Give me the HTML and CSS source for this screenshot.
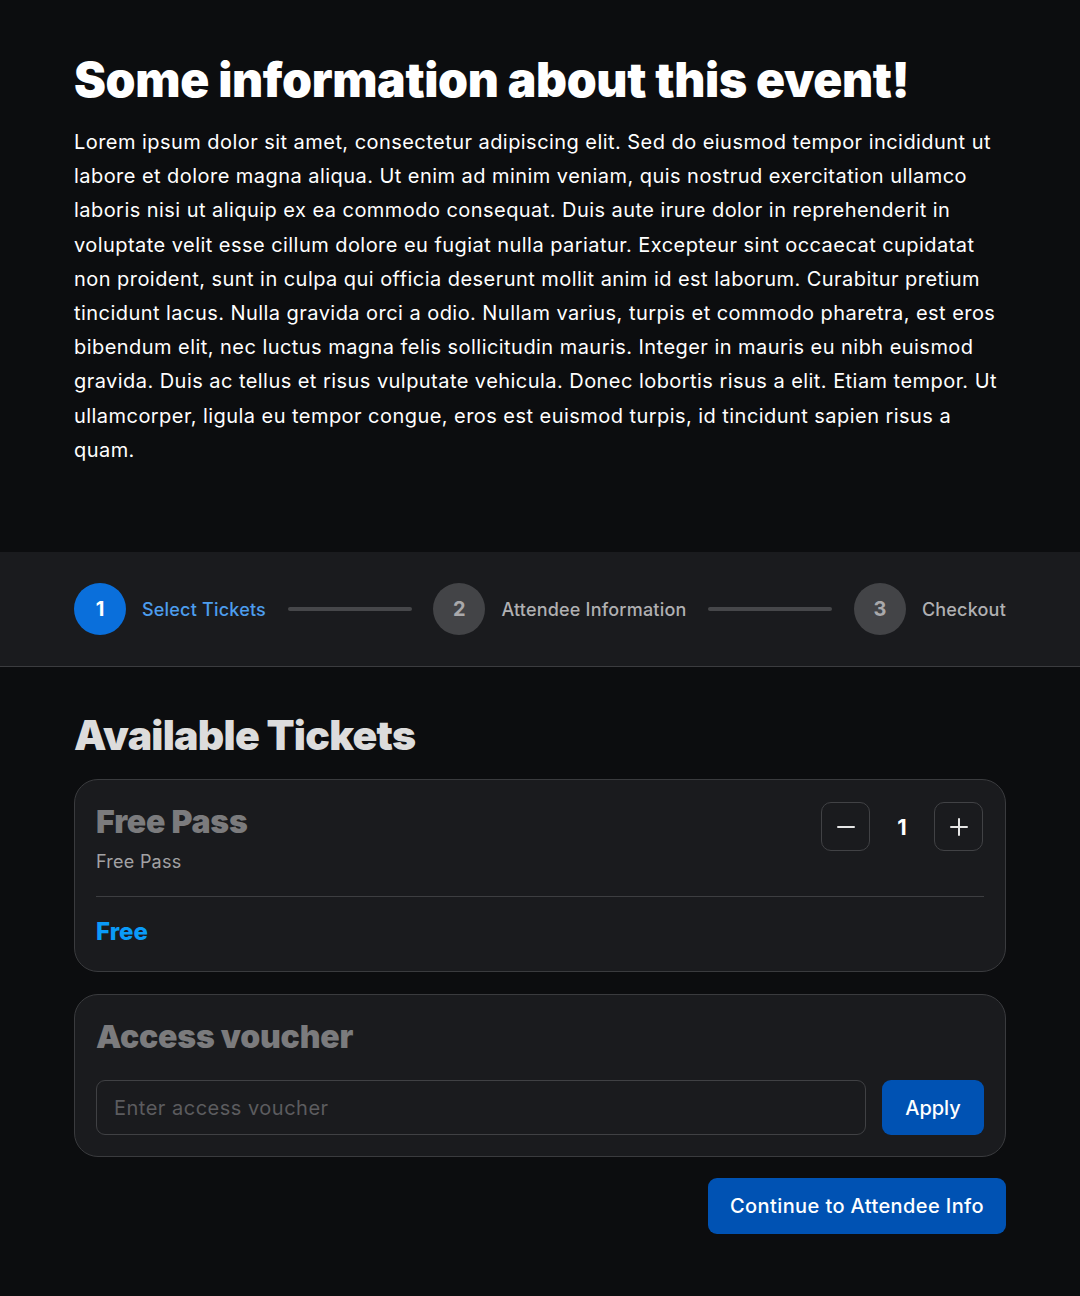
FILE: index.html
```html
<!DOCTYPE html>
<html lang="en">
<head>
<meta charset="utf-8">
<title>Event</title>
<link rel="stylesheet" href="styles.css">
</head>
<body>
<section class="intro">
  <h1 class="intro-title">Some information about this event!</h1>
  <p class="intro-text">Lorem ipsum dolor sit amet, consectetur adipiscing elit. Sed do eiusmod tempor incididunt ut labore et dolore magna aliqua. Ut enim ad minim veniam, quis nostrud exercitation ullamco laboris nisi ut aliquip ex ea commodo consequat. Duis aute irure dolor in reprehenderit in voluptate velit esse cillum dolore eu fugiat nulla pariatur. Excepteur sint occaecat cupidatat non proident, sunt in culpa qui officia deserunt mollit anim id est laborum. Curabitur pretium tincidunt lacus. Nulla gravida orci a odio. Nullam varius, turpis et commodo pharetra, est eros bibendum elit, nec luctus magna felis sollicitudin mauris. Integer in mauris eu nibh euismod gravida. Duis ac tellus et risus vulputate vehicula. Donec lobortis risus a elit. Etiam tempor. Ut ullamcorper, ligula eu tempor congue, eros est euismod turpis, id tincidunt sapien risus a quam.</p>
</section>

<nav class="stepper">
  <div class="stepper-inner">
    <div class="step step-active">
      <span class="step-num">1</span>
      <span class="step-label">Select Tickets</span>
    </div>
    <span class="step-line"></span>
    <div class="step">
      <span class="step-num">2</span>
      <span class="step-label">Attendee Information</span>
    </div>
    <span class="step-line"></span>
    <div class="step">
      <span class="step-num">3</span>
      <span class="step-label">Checkout</span>
    </div>
  </div>
</nav>

<main class="tickets">
  <h2 class="tickets-title">Available Tickets</h2>

  <div class="card">
    <div class="ticket-top">
      <div class="ticket-info">
        <h3 class="card-title">Free Pass</h3>
        <div class="ticket-sub">Free Pass</div>
      </div>
      <div class="qty">
        <button class="qty-btn" aria-label="Decrease">
          <svg width="20" height="20" viewBox="0 0 20 20"><path d="M2 10h16" stroke="#e6e6e6" stroke-width="2" stroke-linecap="round"/></svg>
        </button>
        <span class="qty-val">1</span>
        <button class="qty-btn" aria-label="Increase">
          <svg width="20" height="20" viewBox="0 0 20 20"><path d="M2 10h16M10 2v16" stroke="#e6e6e6" stroke-width="2" stroke-linecap="round"/></svg>
        </button>
      </div>
    </div>
    <div class="ticket-price">Free</div>
  </div>

  <div class="card voucher">
    <h3 class="card-title">Access voucher</h3>
    <div class="voucher-row">
      <input class="voucher-input" type="text" placeholder="Enter access voucher">
      <button class="btn-primary btn-apply">Apply</button>
    </div>
  </div>

  <div class="actions">
    <button class="btn-primary btn-continue">Continue to Attendee Info</button>
  </div>
</main>
</body>
</html>
```

FILE: styles.css
```css
* { box-sizing: border-box; }
html, body { margin: 0; padding: 0; }
body {
  background: #0c0d0f;
  color: #fff;
  font-family: Inter, "Noto Sans", sans-serif;
}
.intro {
  padding: 52px 74px 85px;
}
.intro-title {
  margin: 0;
  font-size: 48px;
  font-weight: 900;
  line-height: 56px;
  letter-spacing: -0.35px;
  color: #fff;
}
.intro-text {
  margin: 17px 0 0;
  font-size: 20px;
  line-height: 34.2px;
  color: #fff;
  letter-spacing: 0.45px;
}
.stepper {
  background: #1a1b1e;
  border-bottom: 1px solid #3b3c3f;
  padding: 31px 74px 31px;
}
.stepper-inner {
  display: flex;
  align-items: center;
  justify-content: space-between;
}
.step {
  display: flex;
  align-items: center;
  gap: 16px;
}
.step-num {
  width: 52px;
  height: 52px;
  border-radius: 50%;
  background: #434447;
  color: #a9a9ab;
  font-size: 20px;
  font-weight: 700;
  display: flex;
  align-items: center;
  justify-content: center;
}
.step-label {
  font-size: 18px;
  font-weight: 500;
  color: #b0b0b2;
  letter-spacing: 0.2px;
}
.step-active .step-num {
  background: #0a6fdb;
  color: #fff;
}
.step-active .step-label {
  color: #4d9ded;
}
.step-line {
  width: 124px;
  height: 4px;
  border-radius: 2px;
  background: #46474a;
}
.tickets {
  padding: 44px 74px 62px;
}
.tickets-title {
  margin: 0 0 20px;
  font-size: 41px;
  line-height: 48px;
  font-weight: 900;
  color: #dcdcdc;
  letter-spacing: -0.75px;
}
.card {
  background: #1a1b1e;
  border: 1px solid #3a3b3e;
  border-radius: 24px;
  padding: 22px 21px 24px;
  margin-bottom: 22px;
}
.ticket-top {
  display: flex;
  justify-content: space-between;
  align-items: flex-start;
  padding-bottom: 22px;
  border-bottom: 1px solid #3d3e41;
}
.card-title {
  margin: 0;
  font-size: 32px;
  line-height: 40px;
  font-weight: 900;
  color: #7b7b7d;
  letter-spacing: -0.2px;
}
.ticket-sub {
  margin-top: 8px;
  font-size: 18px;
  line-height: 24px;
  color: #a2a2a4;
  letter-spacing: 0.25px;
}
.qty {
  display: flex;
  align-items: center;
  gap: 20px;
  margin-right: 1px;
}
.qty-btn {
  width: 49px;
  height: 49px;
  border: 1px solid #414245;
  border-radius: 10px;
  background: #1a1b1e;
  display: flex;
  align-items: center;
  justify-content: center;
  padding: 0;
}
.qty-val {
  font-size: 22px;
  font-weight: 700;
  color: #fff;
  width: 24px;
  text-align: center;
}
.ticket-price {
  margin-top: 20px;
  font-size: 24px;
  line-height: 30px;
  font-weight: 800;
  color: #0a9bf8;
}
.voucher {
  padding-top: 22px;
  padding-bottom: 21px;
  margin-bottom: 21px;
}
.voucher-row {
  display: flex;
  gap: 16px;
  margin-top: 23px;
}
.voucher-input {
  flex: 1;
  height: 55px;
  background: #1a1b1e;
  border: 1px solid #404144;
  border-radius: 9px;
  padding: 0 17px;
  font-family: Inter, "Noto Sans", sans-serif;
  font-size: 20px;
  letter-spacing: 0.5px;
  color: #fff;
  outline: none;
}
.voucher-input::placeholder {
  color: #5c5c5f;
}
.btn-primary {
  background: #0052b3;
  color: #fff;
  border: none;
  border-radius: 9px;
  font-family: Inter, "Noto Sans", sans-serif;
  font-size: 20px;
  font-weight: 500;
}
.btn-apply {
  width: 102px;
  height: 55px;
}
.actions {
  display: flex;
  justify-content: flex-end;
}
.btn-continue {
  height: 56px;
  padding: 0 22px;
  letter-spacing: 0.4px;
}
```
